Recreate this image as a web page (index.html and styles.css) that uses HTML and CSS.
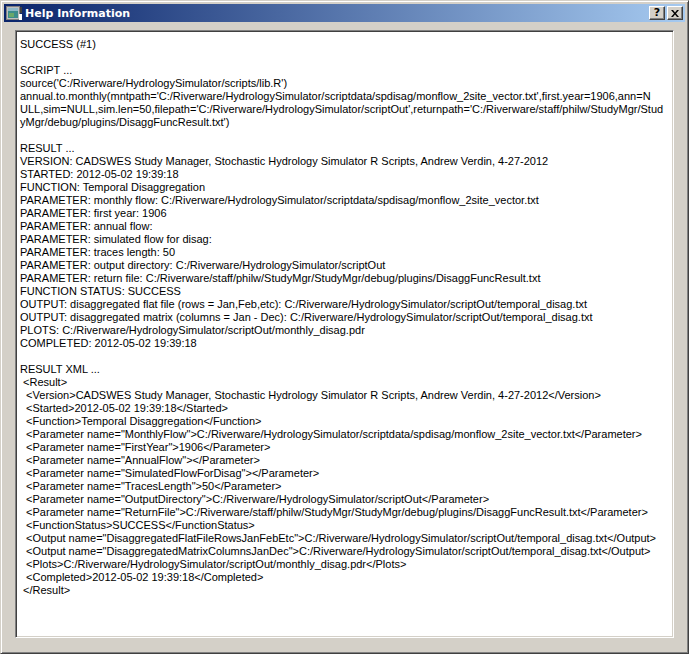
FILE: index.html
```html
<!DOCTYPE html>
<html>
<head>
<meta charset="utf-8">
<link rel="stylesheet" href="styles.css">
</head>
<body>
<div class="window">
  <div class="titlebar">
    <svg class="appicon" width="16" height="16" viewBox="0 0 16 16">
      <rect x="0.5" y="1.5" width="13" height="13" fill="#c0c0c0" stroke="#808080"/>
      <rect x="2" y="3" width="10" height="10" fill="#3d8c8c"/>
      <rect x="2" y="3" width="10" height="3" fill="#8fb8c8"/>
      <rect x="3" y="8" width="5" height="4" fill="#6aa86a"/>
      <rect x="13" y="9" width="3" height="6" fill="#ffffff"/>
      <rect x="14" y="2" width="2" height="6" fill="#404040"/>
    </svg>
    <span class="title">Help Information</span>
    <div class="tbuttons">
      <div class="tbtn">?</div>
      <div class="tbtn">
        <svg width="8" height="7" viewBox="0 0 8 7"><path d="M0 0h2l2 2.5L6 0h2L5 3.5 8 7H6L4 4.5 2 7H0l3-3.5z" fill="#000"/></svg>
      </div>
    </div>
  </div>
  <div class="client">
    <div class="textbox"><pre class="content">SUCCESS (#1)

SCRIPT ...
source('C:/Riverware/HydrologySimulator/scripts/lib.R')
annual.to.monthly(mntpath='C:/Riverware/HydrologySimulator/scriptdata/spdisag/monflow_2site_vector.txt',first.year=1906,ann=N
ULL,sim=NULL,sim.len=50,filepath='C:/Riverware/HydrologySimulator/scriptOut',returnpath='C:/Riverware/staff/philw/StudyMgr/Stud
yMgr/debug/plugins/DisaggFuncResult.txt')

RESULT ...
VERSION: CADSWES Study Manager, Stochastic Hydrology Simulator R Scripts, Andrew Verdin, 4-27-2012
STARTED: 2012-05-02 19:39:18
FUNCTION: Temporal Disaggregation
PARAMETER: monthly flow: C:/Riverware/HydrologySimulator/scriptdata/spdisag/monflow_2site_vector.txt
PARAMETER: first year: 1906
PARAMETER: annual flow:
PARAMETER: simulated flow for disag:
PARAMETER: traces length: 50
PARAMETER: output directory: C:/Riverware/HydrologySimulator/scriptOut
PARAMETER: return file: C:/Riverware/staff/philw/StudyMgr/StudyMgr/debug/plugins/DisaggFuncResult.txt
FUNCTION STATUS: SUCCESS
OUTPUT: disaggregated flat file (rows = Jan,Feb,etc): C:/Riverware/HydrologySimulator/scriptOut/temporal_disag.txt
OUTPUT: disaggregated matrix (columns = Jan - Dec): C:/Riverware/HydrologySimulator/scriptOut/temporal_disag.txt
PLOTS: C:/Riverware/HydrologySimulator/scriptOut/monthly_disag.pdr
COMPLETED: 2012-05-02 19:39:18

RESULT XML ...
 &lt;Result&gt;
  &lt;Version&gt;CADSWES Study Manager, Stochastic Hydrology Simulator R Scripts, Andrew Verdin, 4-27-2012&lt;/Version&gt;
  &lt;Started&gt;2012-05-02 19:39:18&lt;/Started&gt;
  &lt;Function&gt;Temporal Disaggregation&lt;/Function&gt;
  &lt;Parameter name="MonthlyFlow"&gt;C:/Riverware/HydrologySimulator/scriptdata/spdisag/monflow_2site_vector.txt&lt;/Parameter&gt;
  &lt;Parameter name="FirstYear"&gt;1906&lt;/Parameter&gt;
  &lt;Parameter name="AnnualFlow"&gt;&lt;/Parameter&gt;
  &lt;Parameter name="SimulatedFlowForDisag"&gt;&lt;/Parameter&gt;
  &lt;Parameter name="TracesLength"&gt;50&lt;/Parameter&gt;
  &lt;Parameter name="OutputDirectory"&gt;C:/Riverware/HydrologySimulator/scriptOut&lt;/Parameter&gt;
  &lt;Parameter name="ReturnFile"&gt;C:/Riverware/staff/philw/StudyMgr/StudyMgr/debug/plugins/DisaggFuncResult.txt&lt;/Parameter&gt;
  &lt;FunctionStatus&gt;SUCCESS&lt;/FunctionStatus&gt;
  &lt;Output name="DisaggregatedFlatFileRowsJanFebEtc"&gt;C:/Riverware/HydrologySimulator/scriptOut/temporal_disag.txt&lt;/Output&gt;
  &lt;Output name="DisaggregatedMatrixColumnsJanDec"&gt;C:/Riverware/HydrologySimulator/scriptOut/temporal_disag.txt&lt;/Output&gt;
  &lt;Plots&gt;C:/Riverware/HydrologySimulator/scriptOut/monthly_disag.pdr&lt;/Plots&gt;
  &lt;Completed&gt;2012-05-02 19:39:18&lt;/Completed&gt;
 &lt;/Result&gt;</pre></div>
  </div>
</div>
</body>
</html>
```
FILE: styles.css
```css
html, body {
  margin: 0;
  padding: 0;
  background: #d4d0c8;
}
.window {
  box-sizing: border-box;
  width: 689px;
  height: 654px;
  background: #d4d0c8;
  border-top: 1px solid #d4d0c8;
  border-left: 1px solid #d4d0c8;
  border-right: 1px solid #404040;
  border-bottom: 1px solid #404040;
  box-shadow: inset 1px 1px 0 #ffffff, inset -1px -1px 0 #808080;
  padding: 3px;
  display: flex;
  flex-direction: column;
}
.titlebar {
  height: 18px;
  flex: none;
  background: linear-gradient(to right, #0a246a, #a6caf0);
  display: flex;
  align-items: center;
  padding-left: 2px;
  padding-right: 2px;
}
.appicon {
  flex: none;
  margin-right: 3px;
}
.title {
  color: #ffffff;
  font-family: "DejaVu Sans", sans-serif;
  font-weight: bold;
  font-size: 11px;
  flex: 1;
}
.tbuttons {
  display: flex;
  gap: 2px;
}
.tbtn {
  box-sizing: border-box;
  width: 16px;
  height: 14px;
  background: #d4d0c8;
  border-top: 1px solid #ffffff;
  border-left: 1px solid #ffffff;
  border-right: 1px solid #404040;
  border-bottom: 1px solid #404040;
  box-shadow: inset -1px -1px 0 #808080;
  display: flex;
  align-items: center;
  justify-content: center;
  font-family: "DejaVu Sans", sans-serif;
  font-weight: bold;
  font-size: 11px;
  line-height: 12px;
  color: #000;
}
.client {
  flex: 1;
  display: flex;
  padding: 8px 11px 12px 11px;
}
.textbox {
  flex: 1;
  background: #ffffff;
  border-top: 1px solid #808080;
  border-left: 1px solid #808080;
  border-right: 1px solid #ffffff;
  border-bottom: 1px solid #ffffff;
  box-shadow: inset 1px 1px 0 #404040, inset -1px -1px 0 #d4d0c8;
  padding: 7px 4px 4px 4px;
  overflow: hidden;
}
.content {
  margin: 0;
  font-family: "Liberation Sans", Arial, sans-serif;
  font-size: 11px;
  line-height: 13px;
  color: #000;
  white-space: pre;
}
```
